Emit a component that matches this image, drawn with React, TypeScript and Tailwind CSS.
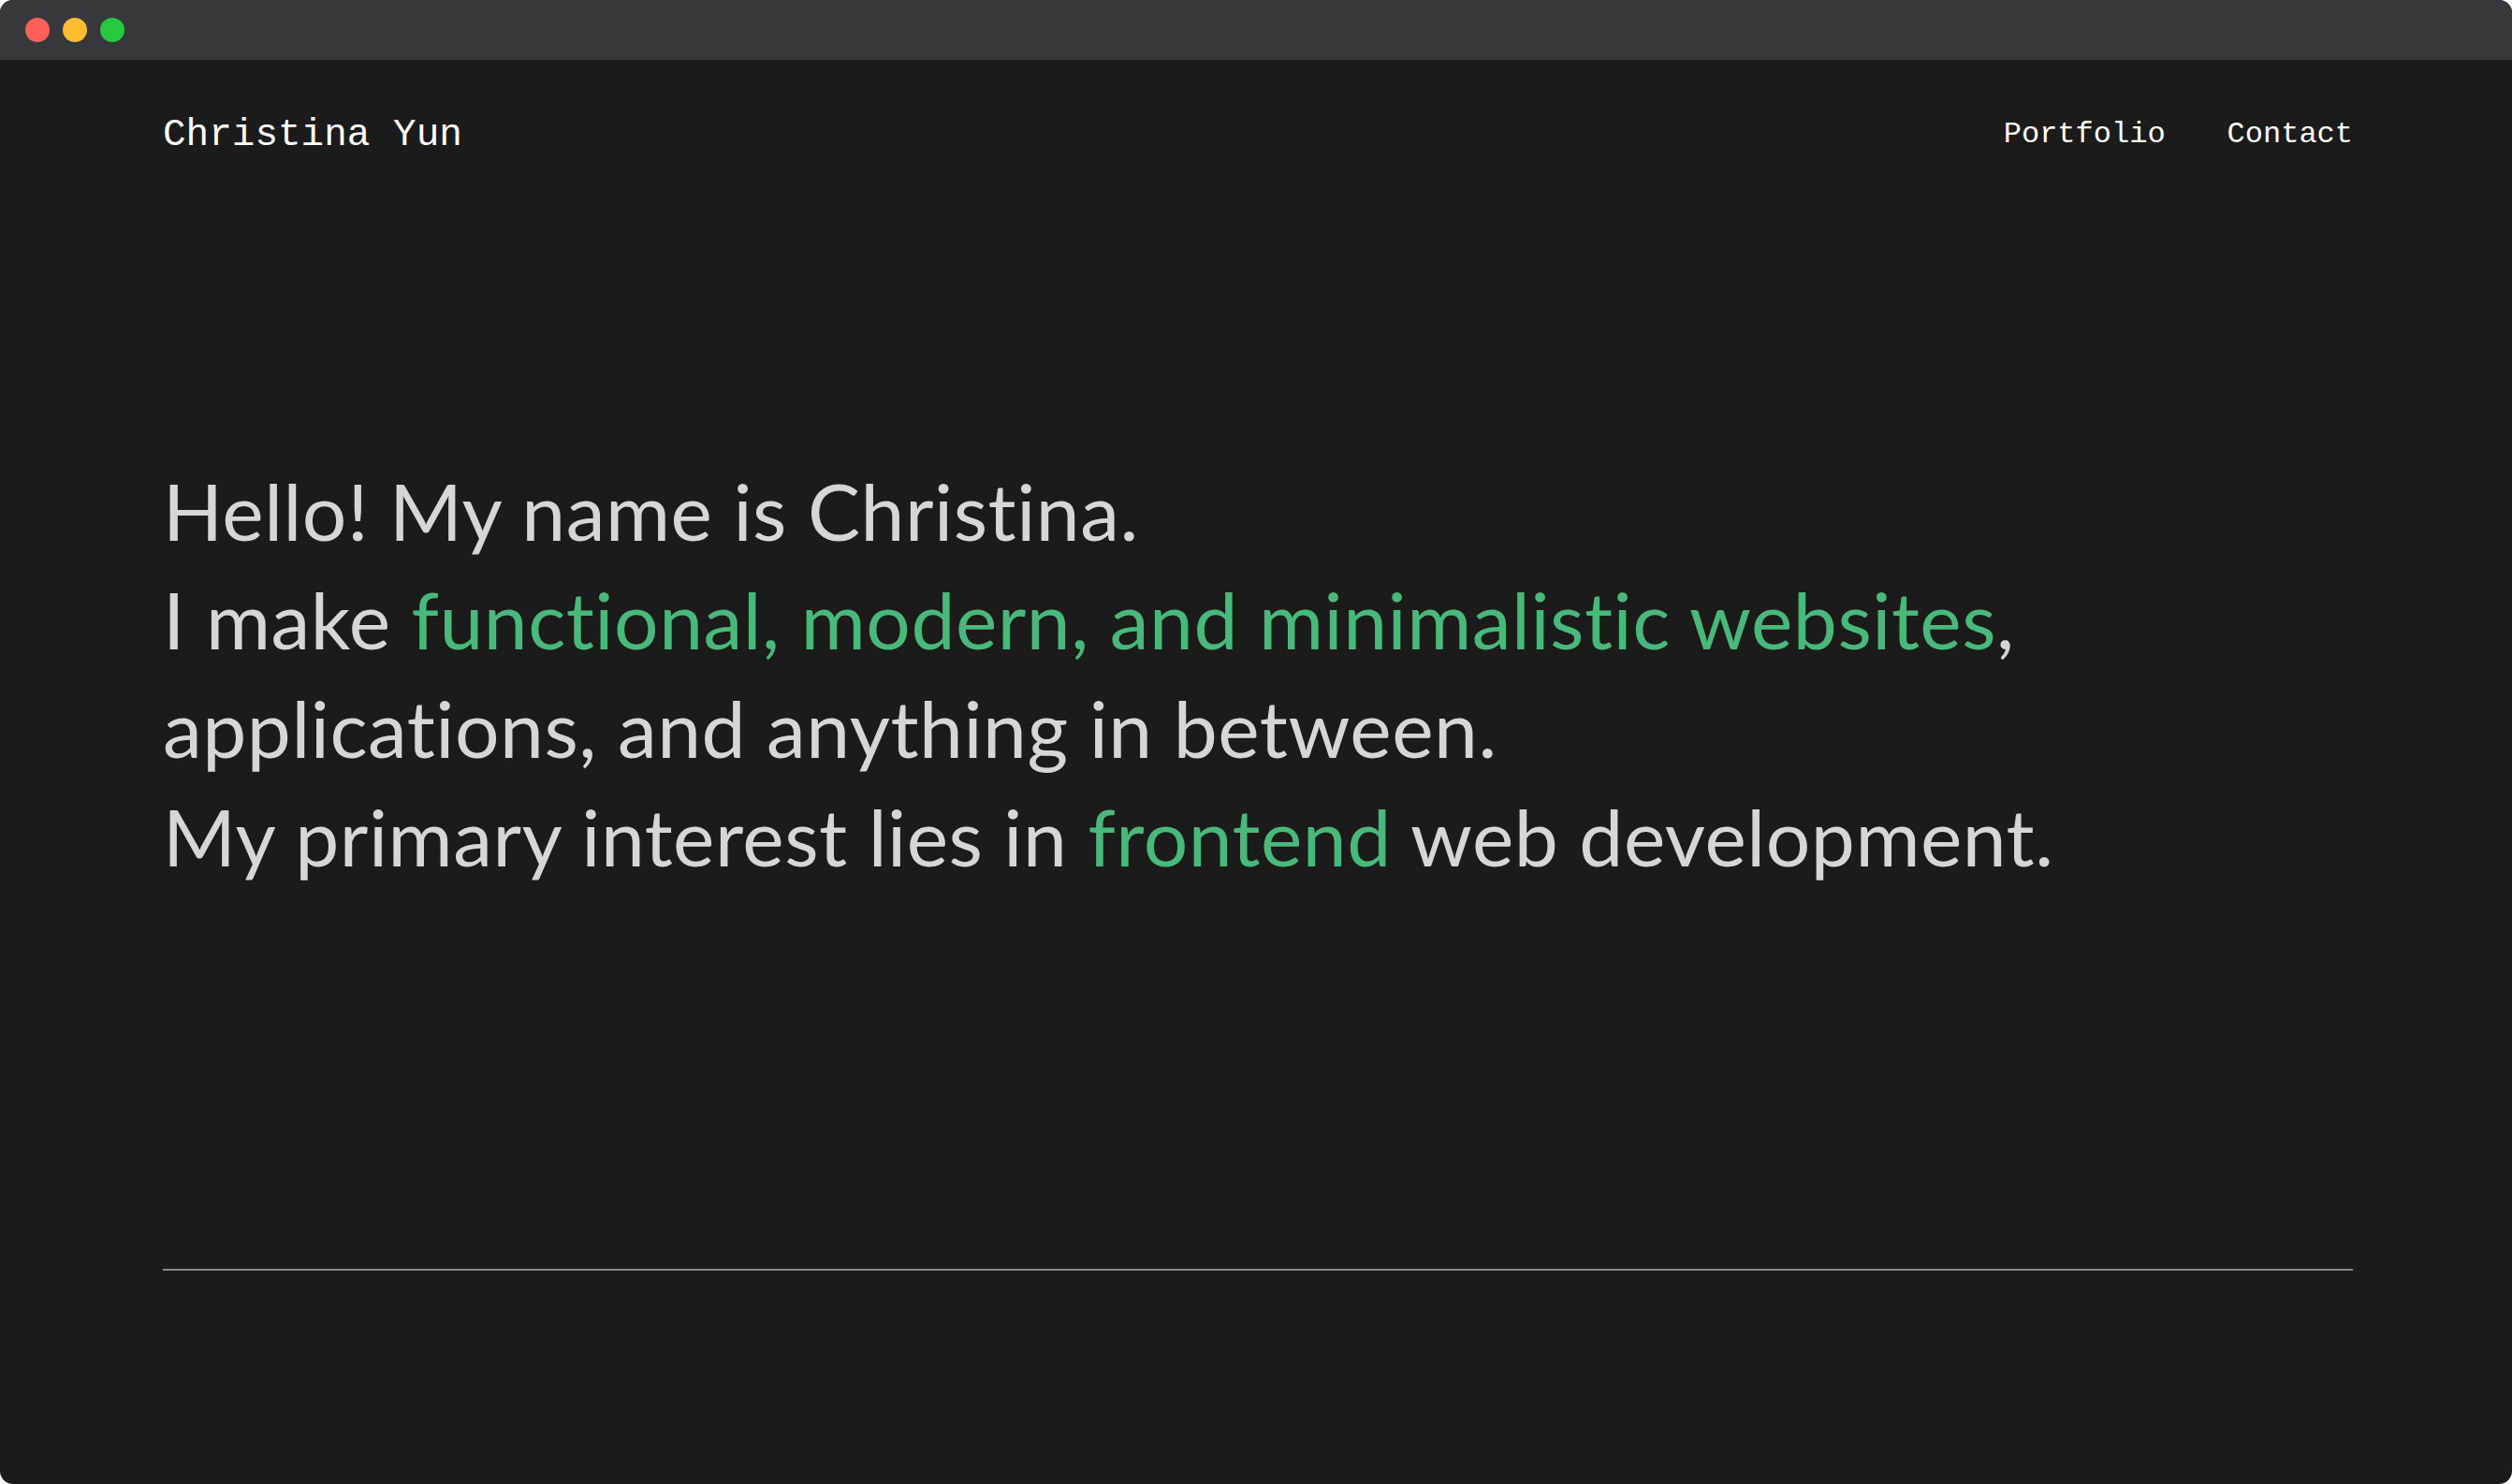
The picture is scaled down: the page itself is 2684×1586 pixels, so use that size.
import React from "react";

const Dot = ({ color }: { color: string }) => (
  <span className={`block h-[26px] w-[26px] rounded-full ${color}`} />
);

export default function App() {
  return (
    <div className="min-h-screen w-full bg-white">
      <div className="flex h-[1586px] w-full flex-col overflow-hidden rounded-[14px] bg-[#1b1b1b]">
        {/* window chrome */}
        <div className="flex h-[64px] shrink-0 items-center gap-[14px] bg-[#37383a] pl-[27px]">
          <Dot color="bg-[#fe5f57]" />
          <Dot color="bg-[#febc2e]" />
          <Dot color="bg-[#28c840]" />
        </div>

        <div className="flex flex-col pl-[174px] pr-[170px] pt-[56px]">
          <header className="flex items-start justify-between">
            <a className="font-['Liberation_Mono',monospace] text-[41px] leading-[48px] text-white">
              Christina Yun
            </a>
            <nav className="mt-[4px] flex gap-[66px] font-['Liberation_Mono',monospace] text-[32px] leading-[40px] text-white">
              <a>Portfolio</a>
              <a>Contact</a>
            </nav>
          </header>

          <h1 className="mt-[320px] font-['Lato',sans-serif] text-[84px] font-normal leading-[116px] tracking-[0.5px] text-[#d6d6d6] [font-variant-ligatures:none]">
            Hello! My name is Christina.
            <br />
            I make <span className="text-[#48b87b]">functional, modern, and minimalistic websites</span>,
            <br />
            applications, and anything in between.
            <br />
            My primary interest lies in <span className="text-[#48b87b]">frontend</span> web development.
          </h1>

          <hr className="mt-[404px] h-[2px] border-0 bg-[#8a8a8a]" />
        </div>
      </div>
    </div>
  );
}
